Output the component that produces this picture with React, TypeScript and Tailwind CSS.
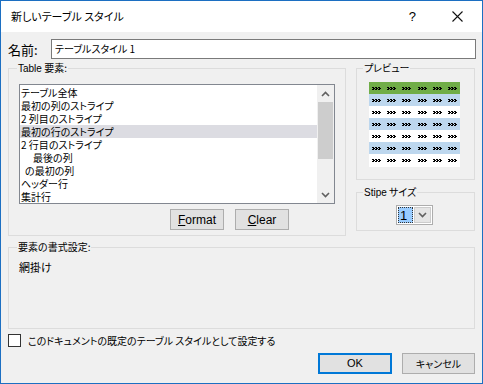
import React from 'react';

const jp = { fontFamily: '"Noto Sans CJK JP", "Noto Sans", sans-serif' };
const latin = { fontFamily: '"Liberation Sans", sans-serif' };

const items = [
  { label: 'テーブル全体', indent: 0 },
  { label: '最初の列のストライプ', indent: 0 },
  { label: '2 列目のストライプ', indent: 0 },
  { label: '最初の行のストライプ', indent: 0, selected: true },
  { label: '2 行目のストライプ', indent: 0 },
  { label: '最後の列', indent: 12 },
  { label: 'の最初の列', indent: 4 },
  { label: 'ヘッダー行', indent: 0 },
  { label: '集計行', indent: 0 },
];

const Glyph = () => (
  <svg width="9" height="3" viewBox="0 0 9 3" shapeRendering="crispEdges" className="block">
    <path d="M0 0h2v1H0zM3 0h2v1H3zM6 0h2v1H6zM1 1h2v1H1zM4 1h2v1H4zM7 1h2v1H7zM0 2h2v1H0zM3 2h2v1H3zM6 2h2v1H6z" fill="#000" />
  </svg>
);

const rowColors = ['bg-[#70ad47]', 'bg-[#bdd7ee]', 'bg-white', 'bg-[#bdd7ee]', 'bg-white', 'bg-[#bdd7ee]', 'bg-white'];

const Chevron = ({ up }: { up?: boolean }) => (
  <svg width="9" height="6" viewBox="0 0 9 6" className="block">
    <path d={up ? 'M1 5 L4.5 1.5 L8 5' : 'M1 1 L4.5 4.5 L8 1'} fill="none" stroke="#606060" strokeWidth="1.6" />
  </svg>
);

export default function App() {
  return (
    <div
      className="w-[483px] h-[384px] border border-[#1c6fc2] bg-[#f0f0f0] flex flex-col text-black [font-feature-settings:'palt']"
      style={jp}
    >
      {/* title bar */}
      <div className="h-[31px] bg-white flex items-center pl-[10px] shrink-0">
        <span className="text-[11px] leading-none">新しいテーブル スタイル</span>
        <span className="ml-auto text-[13px] leading-none mr-[36px]" style={latin}>?</span>
        <svg width="11" height="11" viewBox="0 0 11 11" className="mr-[19px]">
          <path d="M0.5 0.5 L10.5 10.5 M10.5 0.5 L0.5 10.5" stroke="#111" strokeWidth="1.1" />
        </svg>
      </div>

      {/* name row */}
      <div className="flex items-center pt-[7px] pl-[7px] pr-[6px]">
        <span className="text-[13px] leading-none w-[43px]">名前:</span>
        <div className="w-[425px] h-[20px] border border-[#7a7a7a] bg-white flex items-center pl-[3px] text-[10px] leading-none">
          テーブルスタイル 1
        </div>
      </div>

      {/* middle */}
      <div className="flex pl-[7px] mt-[3px] gap-[10px]">
        <fieldset className="w-[338px] h-[174px] border border-[#dcdcdc] p-0">
          <legend className="ml-[8px] px-[1px] text-[10px] leading-[12px]">
            <span style={latin}>Table</span> 要素:
          </legend>
          <div className="mt-[9px] ml-[10px] w-[316px] h-[120px] border border-[#828790] bg-white flex">
            <div className="flex-1 pt-[1px]">
              {items.map((it) => (
                <div
                  key={it.label}
                  className={`h-[13px] flex items-center text-[10px] leading-none ${it.selected ? 'bg-[#dcdce2]' : ''}`}
                  style={{ paddingLeft: 1 + it.indent }}
                >
                  {it.label}
                </div>
              ))}
            </div>
            <div className="w-[17px] bg-[#f0f0f0] flex flex-col items-center">
              <div className="h-[17px] flex items-center justify-center"><Chevron up /></div>
              <div className="w-[15px] h-[57px] bg-[#cdcdcd]" />
              <div className="flex-1" />
              <div className="h-[17px] flex items-center justify-center"><Chevron /></div>
            </div>
          </div>
          <div className="flex mt-[5px] pl-[161px] gap-[11px]" style={latin}>
            <button className="w-[54px] h-[21px] bg-[#e1e1e1] border border-[#adadad] text-[12px] leading-none">
              <span className="underline">F</span>ormat
            </button>
            <button className="w-[54px] h-[21px] bg-[#e1e1e1] border border-[#adadad] text-[12px] leading-none">
              <span className="underline">C</span>lear
            </button>
          </div>
        </fieldset>

        <div className="flex flex-col w-[119px]">
          <fieldset className="h-[118px] border border-[#dcdcdc] p-0">
            <legend className="ml-[6px] px-[1px] text-[10px] leading-[12px]">プレビュー</legend>
            <div className="mt-[8px] ml-[12px] w-[91px] flex flex-col">
              {rowColors.map((c, r) => (
                <div key={r} className={`flex items-center justify-around ${c} ${r === 6 ? 'h-[13px]' : 'h-[12px]'}`}>
                  {Array.from({ length: 6 }).map((_, i) => (
                    <Glyph key={i} />
                  ))}
                </div>
              ))}
            </div>
          </fieldset>
          <fieldset className="mt-[6px] h-[45px] border border-[#dcdcdc] p-0">
            <legend className="ml-[6px] px-[1px] text-[10px] leading-[12px]">
              <span style={latin}>Stipe</span> サイズ
            </legend>
            <div className="mt-[6px] ml-[39px] w-[37px] h-[20px] border border-[#adadad] bg-white flex p-[1px]">
              <div
                className="w-[15px] h-full bg-[#99ccff] border border-dotted border-[#333] flex items-center text-[13px] leading-none pl-[1px]"
                style={latin}
              >
                1
              </div>
              <div className="flex-1 ml-[1px] bg-[#e5e5e5] border border-[#cccccc] flex items-center justify-center">
                <Chevron />
              </div>
            </div>
          </fieldset>
        </div>
      </div>

      {/* format description */}
      <fieldset className="ml-[7px] mt-[5px] w-[467px] h-[88px] border border-[#dcdcdc] p-0">
        <legend className="ml-[8px] px-[1px] text-[10px] leading-[12px]">要素の書式設定:</legend>
        <div className="mt-[9px] ml-[10px] text-[11px] leading-none">網掛け</div>
      </fieldset>

      {/* checkbox */}
      <div className="flex items-center pl-[7px] mt-[5px] gap-[7px]">
        <div className="w-[13px] h-[13px] border border-[#333] bg-white" />
        <span className="text-[10px] leading-none">このドキュメントの既定のテーブル スタイルとして設定する</span>
      </div>

      {/* buttons */}
      <div className="flex justify-end pr-[7px] mt-[6px] gap-[10px]">
        <button className="w-[74px] h-[21px] bg-[#e1e1e1] border-2 border-[#0078d7] text-[11px] leading-none" style={latin}>
          OK
        </button>
        <button className="w-[73px] h-[21px] bg-[#e1e1e1] border border-[#adadad] text-[10px] leading-none">
          キャンセル
        </button>
      </div>
    </div>
  );
}
